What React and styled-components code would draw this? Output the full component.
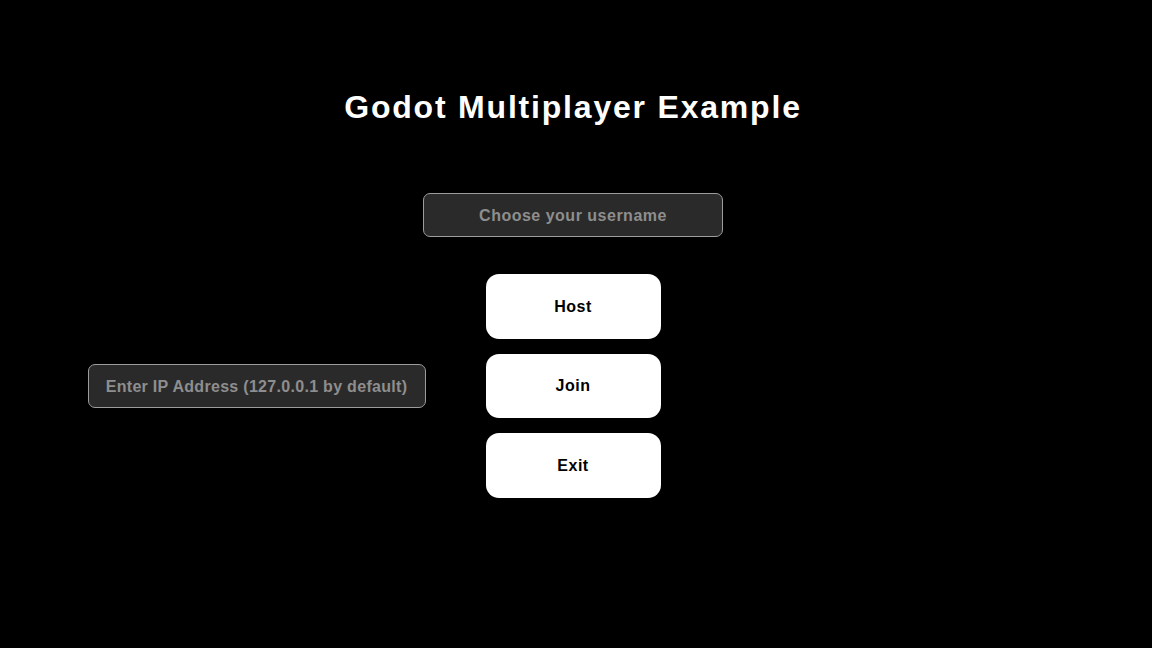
import React from 'react';
import styled, { createGlobalStyle } from 'styled-components';

const GlobalStyle = createGlobalStyle`
    html, body {
        margin: 0;
        padding: 0;
        background: #000;
    }
    * {
        box-sizing: border-box;
    }
`;

const Screen = styled.div`
    width: 100%;
    height: 100vh;
    background-color: #000;
    display: flex;
    flex-direction: column;
    align-items: center;
    padding-top: 87px;
    padding-right: 6px;
    font-family: "Liberation Sans", Arial, sans-serif;
`;

const Title = styled.h1`
    margin: 0;
    height: 40px;
    line-height: 41px;
    font-size: 32px;
    font-weight: 700;
    color: #fff;
    letter-spacing: 1.8px;
`;

const TextField = styled.input`
    width: ${p => p.$width}px;
    height: 44px;
    padding: 2px 0 0;
    background-color: #2a2a2a;
    border: 1px solid #9c9c9c;
    border-radius: 7px;
    color: #fff;
    text-align: center;
    font-family: inherit;
    font-size: 16px;
    font-weight: 700;
    letter-spacing: ${p => p.$spacing}px;
    outline: none;
    &::placeholder {
        color: #8e8e8e;
    }
`;

const UsernameField = styled(TextField)`
    margin-top: 66px;
`;

const MenuRow = styled.div`
    margin-top: 37px;
    width: 100%;
    display: grid;
    grid-template-columns: 1fr 175px 1fr;
    column-gap: 60px;
    align-items: center;
`;

const LeftCell = styled.div`
    display: flex;
    justify-content: flex-end;
`;

const ButtonStack = styled.div`
    display: flex;
    flex-direction: column;
    gap: 15px;
`;

const MenuButton = styled.button`
    width: 175px;
    height: 64.5px;
    padding-top: 2px;
    background-color: #fff;
    border: none;
    border-radius: 13px;
    color: #000;
    font-family: inherit;
    font-size: 16px;
    font-weight: 700;
    letter-spacing: 0.5px;
    cursor: pointer;
`;

export default function App() {
    return (
        <>
            <GlobalStyle />
            <Screen>
                <Title>Godot Multiplayer Example</Title>
                <UsernameField $width={300} $spacing={0.5} placeholder="Choose your username" />
                <MenuRow>
                    <LeftCell>
                        <TextField $width={338} $spacing={0.3} placeholder="Enter IP Address (127.0.0.1 by default)" />
                    </LeftCell>
                    <ButtonStack>
                        <MenuButton>Host</MenuButton>
                        <MenuButton>Join</MenuButton>
                        <MenuButton>Exit</MenuButton>
                    </ButtonStack>
                    <div />
                </MenuRow>
            </Screen>
        </>
    );
}
